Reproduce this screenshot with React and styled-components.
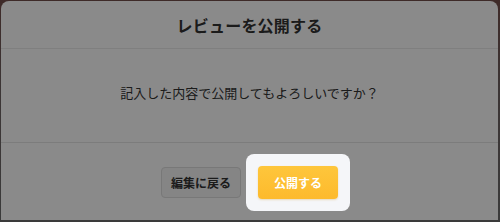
import React from "react";
import styled, { createGlobalStyle } from "styled-components";

const Global = createGlobalStyle`
  html, body { margin: 0; padding: 0; }
  body {
    width: 500px;
    height: 222px;
    overflow: hidden;
    background: linear-gradient(180deg, #744f4b 0%, #6e6262 40%, #6c6c6c 100%);
    font-family: "Noto Sans CJK JP", "Noto Sans", sans-serif;
  }
`;

const Page = styled.div`
  padding: 1px 2px 2px 1px;
`;

const Dialog = styled.div`
  height: 219px;
  background: #ffffff;
  border-radius: 8px 8px 0 0;
  display: flex;
  flex-direction: column;
  color: #333333;
`;

const Header = styled.div`
  height: 47px;
  border-bottom: 1px solid #ebebeb;
  display: flex;
  align-items: center;
  justify-content: center;
`;

const Title = styled.h2`
  margin: 0;
  font-size: 16px;
  font-weight: 700;
  letter-spacing: 0.2px;
`;

const Body = styled.div`
  height: 93px;
  box-sizing: border-box;
  padding-bottom: 7px;
  display: flex;
  align-items: center;
  justify-content: center;
`;

const Message = styled.p`
  margin: 0;
  font-size: 13px;
`;

const Footer = styled.div`
  flex: 1;
  border-top: 1px solid #e6e6e6;
  display: flex;
  align-items: center;
  justify-content: center;
  gap: 17px;
  padding-top: 2px;
`;

const Button = styled.button`
  font-family: inherit;
  font-size: 12px;
  font-weight: 700;
  width: 80px;
  border-radius: 4px;
  cursor: pointer;
  display: flex;
  align-items: center;
  justify-content: center;
  padding: 0;
`;

const CancelButton = styled(Button)`
  height: 31px;
  background: #f5f5f5;
  border: 1px solid #dedede;
  color: #333333;
`;

const Spotlight = styled.div`
  position: relative;
  z-index: 1;
  margin: -12px;
  padding: 12px;
  border-radius: 8px;
  background: #f5f6f9;
  box-shadow: 0 0 0 9999px rgba(0, 0, 0, 0.46);
`;

const PrimaryButton = styled(Button)`
  height: 33px;
  border: none;
  color: #ffffff;
  background: linear-gradient(180deg, #fec63c 0%, #fdba2c 100%);
  box-shadow: 0 1px 2px rgba(200, 140, 0, 0.25);
`;

export default function App() {
  return (
    <>
      <Global />
      <Page>
        <Dialog>
          <Header>
            <Title>レビューを公開する</Title>
          </Header>
          <Body>
            <Message>記入した内容で公開してもよろしいですか？</Message>
          </Body>
          <Footer>
            <CancelButton>編集に戻る</CancelButton>
            <Spotlight>
              <PrimaryButton>公開する</PrimaryButton>
            </Spotlight>
          </Footer>
        </Dialog>
      </Page>
    </>
  );
}
